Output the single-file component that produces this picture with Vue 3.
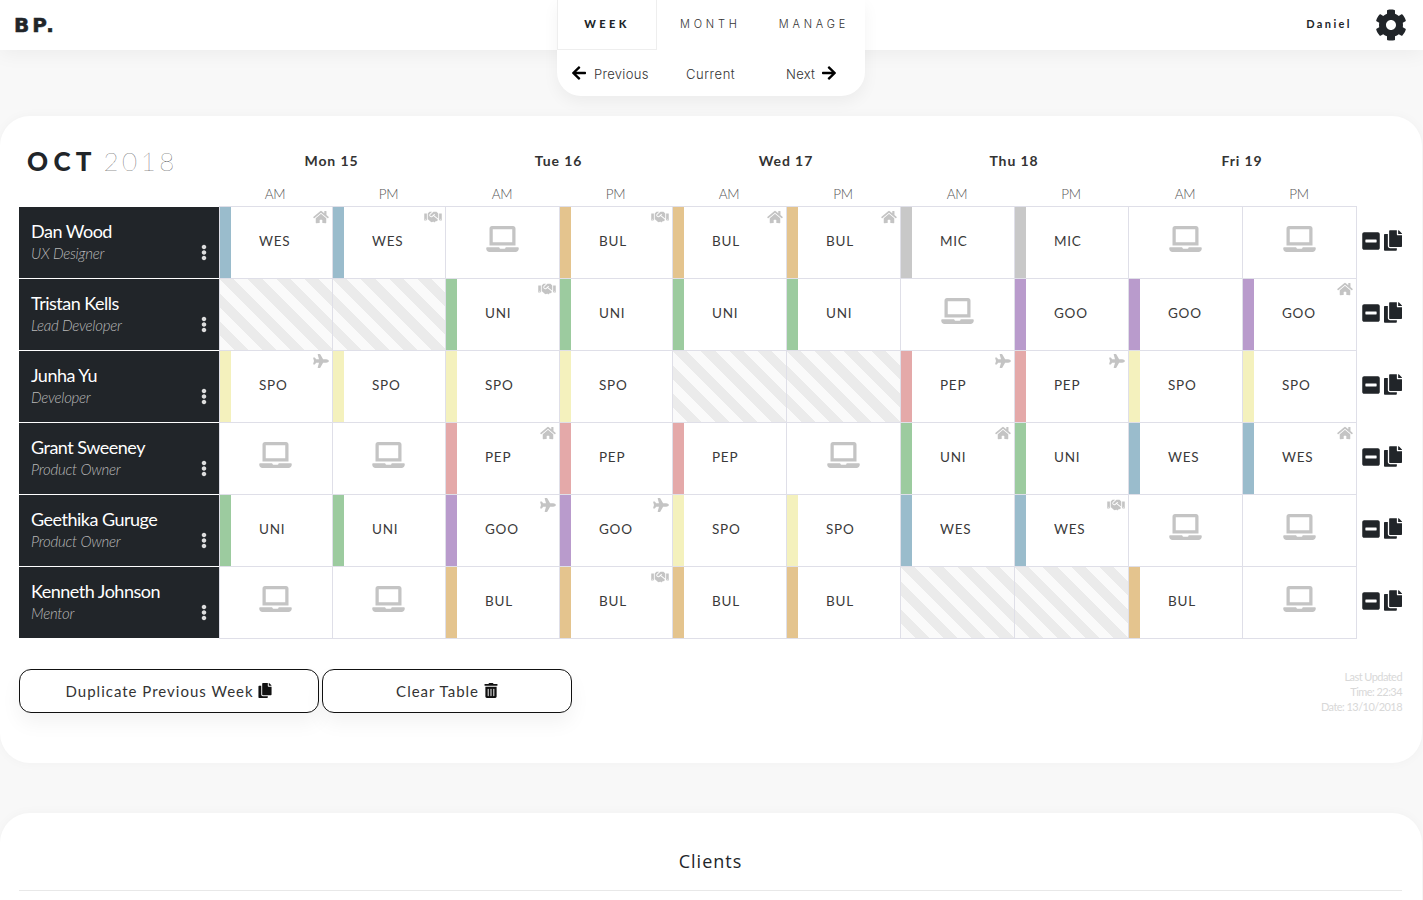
<template>
  <div class="page">
    <header class="topbar">
      <div class="logo">BP.</div>
      <nav class="nav">
        <div class="tabs">
          <a class="tab active">WEEK</a>
          <a class="tab month">MONTH</a>
          <a class="tab manage">MANAGE</a>
        </div>
        <div class="subnav">
          <a class="sub prev"><svg class="arrow" viewBox="0 0 448 512"><path :d="icons.left" /></svg>Previous</a>
          <a class="sub current">Current</a>
          <a class="sub next">Next<svg class="arrow" viewBox="0 0 448 512"><path :d="icons.right" /></svg></a>
        </div>
      </nav>
      <div class="user">
        <span class="username">Daniel</span>
        <svg class="cog" viewBox="0 0 512 512"><path :d="icons.cog" /></svg>
      </div>
    </header>

    <main class="main">
      <section class="card schedule">
        <div class="grid">
          <div class="title"><b>OCT</b> <span>2018</span></div>
          <div v-for="d in days" :key="d" class="day">{{ d }}</div>
          <div class="blank"></div>

          <div class="blank"></div>
          <template v-for="d in days" :key="d">
            <div class="half">AM</div>
            <div class="half">PM</div>
          </template>
          <div class="blank"></div>

          <template v-for="(p, r) in people" :key="p.name">
            <div class="person">
              <div class="name">{{ p.name }}</div>
              <div class="role">{{ p.role }}</div>
              <svg class="dots" viewBox="0 0 192 512"><path :d="icons.dots" /></svg>
            </div>
            <div
              v-for="(c, i) in p.cells"
              :key="i"
              class="cell"
              :class="{ first: r === 0, striped: c === 'x', monday: i < 2 }"
            >
              <template v-if="c === 'l'">
                <svg class="laptop" viewBox="0 0 640 512"><path :d="icons.laptop" /></svg>
              </template>
              <template v-else-if="c !== 'x'">
                <span class="band" :style="{ background: colors[code(c)] }"></span>
                <span class="code">{{ code(c) }}</span>
                <svg v-if="kind(c)" class="mark" :class="kind(c)" :viewBox="boxes[kind(c)]"><path :d="icons[kind(c)]" /></svg>
              </template>
            </div>
            <div class="row-actions">
              <svg class="act minus" viewBox="0 0 448 512"><path :d="icons.minus" /></svg>
              <svg class="act copy" viewBox="0 0 448 512"><path :d="icons.copy" /></svg>
            </div>
          </template>
        </div>

        <div class="footer">
          <button class="btn dup">Duplicate Previous Week <svg viewBox="0 0 448 512"><path :d="icons.copy" /></svg></button>
          <button class="btn clear">Clear Table <svg viewBox="0 0 448 512"><path :d="icons.trash" /></svg></button>
          <div class="updated">
            <div>Last Updated</div>
            <div>Time: 22:34</div>
            <div>Date: 13/10/2018</div>
          </div>
        </div>
      </section>

      <section class="card clients">
        <h2>Clients</h2>
      </section>
    </main>
  </div>
</template>

<script setup>
const days = ['Mon 15', 'Tue 16', 'Wed 17', 'Thu 18', 'Fri 19']

const colors = {
  WES: '#9abccc',
  BUL: '#e4c48e',
  MIC: '#c8c8c8',
  UNI: '#9ccb9f',
  GOO: '#b99bcc',
  SPO: '#f4f1bd',
  PEP: '#e4a9a9'
}

// l = on the laptop, x = not working, CODE:mark = client + where
const people = [
  { name: 'Dan Wood', role: 'UX Designer', cells: ['WES:home', 'WES:shake', 'l', 'BUL:shake', 'BUL:home', 'BUL:home', 'MIC', 'MIC', 'l', 'l'] },
  { name: 'Tristan Kells', role: 'Lead Developer', cells: ['x', 'x', 'UNI:shake', 'UNI', 'UNI', 'UNI', 'l', 'GOO', 'GOO', 'GOO:home'] },
  { name: 'Junha Yu', role: 'Developer', cells: ['SPO:plane', 'SPO', 'SPO', 'SPO', 'x', 'x', 'PEP:plane', 'PEP:plane', 'SPO', 'SPO'] },
  { name: 'Grant Sweeney', role: 'Product Owner', cells: ['l', 'l', 'PEP:home', 'PEP', 'PEP', 'l', 'UNI:home', 'UNI', 'WES', 'WES:home'] },
  { name: 'Geethika Guruge', role: 'Product Owner', cells: ['UNI', 'UNI', 'GOO:plane', 'GOO:plane', 'SPO', 'SPO', 'WES', 'WES:shake', 'l', 'l'] },
  { name: 'Kenneth Johnson', role: 'Mentor', cells: ['l', 'l', 'BUL', 'BUL:shake', 'BUL', 'BUL', 'x', 'x', 'BUL', 'l'] }
]

const code = (c) => c.split(':')[0]
const kind = (c) => c.split(':')[1]

const boxes = { home: '0 0 576 512', shake: '0 0 640 512', plane: '0 0 576 512' }

const icons = {
  left: 'M257.5 445.1l-22.2 22.2c-9.4 9.4-24.6 9.4-33.9 0L7 273c-9.4-9.4-9.4-24.6 0-33.9L201.4 44.7c9.4-9.4 24.6-9.4 33.9 0l22.2 22.2c9.5 9.5 9.3 25-.4 34.3L136.6 216H424c13.3 0 24 10.7 24 24v32c0 13.3-10.7 24-24 24H136.6l120.5 114.8c9.8 9.3 10 24.8.4 34.3z',
  right: 'M190.5 66.9l22.2-22.2c9.4-9.4 24.6-9.4 33.9 0L441 239c9.4 9.4 9.4 24.6 0 33.9L246.6 467.3c-9.4 9.4-24.6 9.4-33.9 0l-22.2-22.2c-9.5-9.5-9.3-25 .4-34.3L311.4 296H24c-13.3 0-24-10.7-24-24v-32c0-13.3 10.7-24 24-24h287.4L190.9 101.2c-9.8-9.3-10-24.8-.4-34.3z',
  cog: 'M487.4 315.7l-42.6-24.6c4.3-23.2 4.3-47 0-70.2l42.6-24.6c4.9-2.8 7.1-8.6 5.5-14-11.1-35.6-30-67.8-54.7-94.6-3.8-4.1-10-5.1-14.8-2.3L380.8 110c-17.9-15.4-38.5-27.3-60.8-35.1V25.8c0-5.6-3.9-10.5-9.4-11.7-36.7-8.2-74.3-7.8-109.2 0-5.5 1.2-9.4 6.1-9.4 11.7V75c-22.2 7.9-42.8 19.8-60.8 35.1L88.7 85.5c-4.9-2.8-11-1.9-14.8 2.3-24.7 26.7-43.6 58.9-54.7 94.6-1.7 5.4.6 11.2 5.5 14L67.3 221c-4.3 23.2-4.3 47 0 70.2l-42.6 24.6c-4.9 2.8-7.1 8.6-5.5 14 11.1 35.6 30 67.8 54.7 94.6 3.8 4.1 10 5.1 14.8 2.3l42.6-24.6c17.9 15.4 38.5 27.3 60.8 35.1v49.2c0 5.6 3.9 10.5 9.4 11.7 36.7 8.2 74.3 7.8 109.2 0 5.5-1.2 9.4-6.1 9.4-11.7v-49.2c22.2-7.9 42.8-19.8 60.8-35.1l42.6 24.6c4.9 2.8 11 1.9 14.8-2.3 24.7-26.7 43.6-58.9 54.7-94.6 1.5-5.5-.7-11.3-5.6-14.1zM256 336c-44.1 0-80-35.9-80-80s35.9-80 80-80 80 35.9 80 80-35.9 80-80 80z',
  home: 'M280.37 148.26L96 300.11V464a16 16 0 0 0 16 16l112.06-.29a16 16 0 0 0 15.92-16V368a16 16 0 0 1 16-16h64a16 16 0 0 1 16 16v95.64a16 16 0 0 0 16 16.05L464 480a16 16 0 0 0 16-16V300L295.67 148.26a12.19 12.19 0 0 0-15.3 0zM571.6 251.47L488 182.56V44.05a12 12 0 0 0-12-12h-56a12 12 0 0 0-12 12v72.61L318.47 43a48 48 0 0 0-61 0L4.34 251.47a12 12 0 0 0-1.6 16.9l25.5 31A12 12 0 0 0 45.15 301l235.22-193.74a12.19 12.19 0 0 1 15.3 0L530.9 301a12 12 0 0 0 16.9-1.6l25.5-31a12 12 0 0 0-1.7-16.93z',
  plane: 'M480 192H365.71L260.61 8.06A16.014 16.014 0 0 0 246.71 0h-65.5c-10.63 0-18.3 10.17-15.38 20.39L214.86 192H112l-43.2-57.6c-3.02-4.03-7.77-6.4-12.8-6.4H16.01C5.6 128-2.04 137.78.49 147.88L32 256 .49 364.12C-2.04 374.22 5.6 384 16.01 384H56c5.04 0 9.78-2.37 12.8-6.4L112 320h102.86l-49.03 171.6c-2.92 10.22 4.75 20.4 15.38 20.4h65.5c5.74 0 11.04-3.08 13.89-8.06L365.71 320H480c35.35 0 96-28.65 96-64s-60.65-64-96-64z',
  shake: 'M434.7 64h-85.9c-8 0-15.7 3-21.6 8.4l-98.3 90c-.1.1-.2.3-.3.4-16.6 15.6-16.3 40.5-2.1 56 12.7 13.9 39.4 17.6 56.1 2.7.1-.1.3-.1.4-.2l79.9-73.2c6.5-5.9 16.7-5.5 22.6 1 6 6.5 5.5 16.6-1 22.6l-26.1 23.9L504 313.8c2.9 2.4 5.5 5 7.9 7.7V128l-54.6-54.6c-5.9-6-14.1-9.4-22.6-9.4zM544 128.2v223.9c0 17.7 14.3 32 32 32h64V128.2h-96zm48 223.9c-8.8 0-16-7.2-16-16s7.2-16 16-16 16 7.2 16 16-7.2 16-16 16zM0 384h64c17.7 0 32-14.3 32-32V128.2H0V384zm48-63.9c8.8 0 16 7.2 16 16s-7.2 16-16 16-16-7.2-16-16c0-8.9 7.2-16 16-16zm435.9 18.6L334.6 217.5l-30 27.5c-29.7 27.1-75.2 24.5-101.7-4.4-26.9-29.4-24.8-74.9 4.4-101.7L289.1 64h-83.8c-8.5 0-16.6 3.4-22.6 9.4L128 128v223.9h18.3l90.5 81.9c27.4 22.3 67.7 18.1 90-9.3l.2-.2 17.9 15.5c15.9 13 39.4 10.5 52.3-5.4l31.4-38.6 5.4 4.4c13.7 11.1 33.9 9.1 45-4.7l9.5-11.7c11.2-13.8 9.1-33.9-4.6-45.1z',
  laptop: 'M624 416H381.54c-.74 19.81-14.71 32-32.74 32H288c-18.69 0-33.02-17.47-32.77-32H16c-8.8 0-16 7.2-16 16v16c0 35.2 28.8 64 64 64h512c35.2 0 64-28.8 64-64v-16c0-8.8-7.2-16-16-16zM576 48c0-26.4-21.6-48-48-48H112C85.6 0 64 21.6 64 48v336h512V48zm-64 272H128V64h384v256z',
  dots: 'M96 184c39.8 0 72 32.2 72 72s-32.2 72-72 72-72-32.2-72-72 32.2-72 72-72zM24 80c0 39.8 32.2 72 72 72s72-32.2 72-72S135.8 8 96 8 24 40.2 24 80zm0 352c0 39.8 32.2 72 72 72s72-32.2 72-72-32.2-72-72-72-72 32.2-72 72z',
  minus: 'M400 32H48C21.5 32 0 53.5 0 80v352c0 26.5 21.5 48 48 48h352c26.5 0 48-21.5 48-48V80c0-26.5-21.5-48-48-48zM92 296c-6.6 0-12-5.4-12-12v-56c0-6.6 5.4-12 12-12h264c6.6 0 12 5.4 12 12v56c0 6.6-5.4 12-12 12H92z',
  copy: 'M320 448v40c0 13.255-10.745 24-24 24H24c-13.255 0-24-10.745-24-24V120c0-13.255 10.745-24 24-24h72v296c0 30.879 25.121 56 56 56h168zm0-344V0H152c-13.255 0-24 10.745-24 24v368c0 13.255 10.745 24 24 24h272c13.255 0 24-10.745 24-24V128H344c-13.2 0-24-10.8-24-24zm120.971-31.029L375.029 7.029A24 24 0 0 0 358.059 0H352v96h96v-6.059a24 24 0 0 0-7.029-16.97z',
  trash: 'M32 464a48 48 0 0 0 48 48h288a48 48 0 0 0 48-48V128H32zm272-256a16 16 0 0 1 32 0v224a16 16 0 0 1-32 0zm-96 0a16 16 0 0 1 32 0v224a16 16 0 0 1-32 0zm-96 0a16 16 0 0 1 32 0v224a16 16 0 0 1-32 0zM432 32H312l-9.4-18.7A24 24 0 0 0 281.1 0H166.8a23.72 23.72 0 0 0-21.4 13.3L136 32H16A16 16 0 0 0 0 48v32a16 16 0 0 0 16 16h416a16 16 0 0 0 16-16V48a16 16 0 0 0-16-16z'
}
</script>

<style>
html, body {
  margin: 0;
  background: #f8f8f8;
  overflow: hidden;
}
</style>

<style scoped>
.page {
  height: 900px;
  overflow: hidden;
  background: #f8f8f8;
  font-family: Lato, "Liberation Sans", sans-serif;
  color: #212529;
}

/* Top bar */
.topbar {
  position: relative;
  z-index: 5;
  height: 50px;
  display: flex;
  align-items: center;
  justify-content: space-between;
  padding: 0 16px 0 14px;
  background: #fff;
  box-shadow: 0 4px 20px rgba(0, 0, 0, 0.05);
}

.logo {
  font-family: "DejaVu Sans", sans-serif;
  font-weight: 700;
  font-size: 20px;
  letter-spacing: 3px;
  -webkit-text-stroke: 0.5px #212529;
}

.nav {
  position: absolute;
  left: 557px;
  top: 0;
  width: 308px;
  background: #fff;
  border-radius: 0 0 24px 24px;
  box-shadow: 0 6px 16px rgba(0, 0, 0, 0.05);
  font-family: Inter, sans-serif;
}

.tabs {
  display: flex;
  height: 50px;
  align-items: center;
}

.tab {
  font-size: 11px;
  font-weight: 300;
  letter-spacing: 3.8px;
  color: #333;
  margin-top: -2px;
}

.tab.active {
  box-sizing: border-box;
  width: 100px;
  height: 50px;
  margin-top: 0;
  line-height: 48px;
  text-align: center;
  border: 1px solid #eee;
  border-top: 0;
  font-family: Lato, sans-serif;
  font-weight: 900;
  letter-spacing: 3.4px;
  color: #212529;
}

.tab.month {
  margin-left: 23px;
}

.tab.manage {
  margin-left: 38px;
}

.subnav {
  display: flex;
  height: 46px;
  align-items: center;
  font-size: 13px;
  font-weight: 300;
  letter-spacing: 0.3px;
  color: #333;
  padding: 2px 0 0 15px;
  box-sizing: border-box;
}

.sub {
  display: flex;
  align-items: center;
}

.prev {
  width: 114px;
}

.current {
  width: 100px;
  margin-top: -1px;
  letter-spacing: 0.55px;
}

.arrow {
  width: 14px;
  height: 16px;
  fill: #000;
}

.prev .arrow {
  margin-right: 8px;
  margin-top: -2px;
}

.next .arrow {
  margin-left: 7px;
  margin-top: -2px;
}

.user {
  display: flex;
  align-items: center;
  gap: 23px;
}

.username {
  margin-top: -3px;
  font-size: 11px;
  font-weight: 700;
  letter-spacing: 2.4px;
}

.cog {
  width: 32px;
  height: 32px;
  fill: #212529;
}

/* Cards */
.main {
  padding-top: 66px;
}

.card {
  box-sizing: border-box;
  margin-right: 1px;
  padding: 0 20px 0 19px;
  background: #fff;
  border-radius: 30px;
  box-shadow: 0 0 12px rgba(0, 0, 0, 0.03);
}

.schedule {
  padding-top: 30px;
  padding-bottom: 49px;
}

.grid {
  display: grid;
  grid-template-columns: 200px 114px 113px 114px 113px repeat(6, 114px) 45px;
  grid-template-rows: 30px 31px repeat(6, 72px);
}

.title {
  padding: 0 0 0 8px;
  font-size: 26px;
  line-height: 30px;
  white-space: nowrap;
}

.title b {
  font-weight: 900;
  letter-spacing: 5.3px;
}

.title span {
  font-weight: 100;
  letter-spacing: 3.5px;
  color: #111;
}

.day {
  grid-column: span 2;
  text-align: center;
  font-size: 14px;
  font-weight: 700;
  letter-spacing: 0.9px;
  line-height: 30px;
  padding-right: 2px;
  color: #333;
}

.half {
  text-align: center;
  font-size: 13.5px;
  font-weight: 300;
  letter-spacing: -0.2px;
  color: #555;
  line-height: 36px;
  padding-right: 2px;
}

.person {
  position: relative;
  background: #212529;
  margin-bottom: 1px;
  padding: 12px 0 0 12px;
  color: #fff;
}

.name {
  font-size: 18px;
  font-weight: 400;
  letter-spacing: -0.5px;
  line-height: 24px;
}

.role {
  font-size: 15px;
  font-weight: 300;
  font-style: italic;
  letter-spacing: -0.25px;
  line-height: 20px;
  color: #b8b8b8;
}

.dots {
  position: absolute;
  right: 12px;
  top: 37px;
  width: 6px;
  height: 17px;
  fill: #ddd;
}

.cell {
  position: relative;
  box-sizing: border-box;
  display: flex;
  align-items: center;
  justify-content: center;
  border-right: 1px solid #dfdfe8;
  border-bottom: 1px solid #dfdfe8;
}

.cell.first {
  border-top: 1px solid #dfdfe8;
  margin-top: -1px;
}

.person + .cell {
  border-left: 1px solid #dfdfe8;
}

.cell.striped {
  background: repeating-linear-gradient(45deg, #fafafa 0 10px, #ebebeb 10px 20px);
}

.band {
  position: absolute;
  left: 0;
  top: 0;
  bottom: 0;
  width: 11px;
}

.code {
  position: absolute;
  left: 39px;
  top: 50%;
  margin-top: -13px;
  font-size: 13.5px;
  letter-spacing: 0.75px;
  line-height: 22px;
  color: #3a3a3a;
}

.laptop {
  width: 33px;
  height: 26px;
  margin-top: -7px;
  fill: #c4c4c4;
}

.monday .laptop {
  margin-right: 2px;
}

.mark {
  position: absolute;
  top: 3px;
  right: 3px;
  height: 14px;
  fill: #c4c4c4;
}

.mark.home,
.mark.plane {
  width: 16px;
}

.mark.shake {
  width: 18px;
}

.row-actions {
  display: flex;
  align-items: center;
  justify-content: flex-end;
  gap: 4px;
  padding-bottom: 5px;
}

.act {
  fill: #212529;
}

.minus {
  width: 18px;
  height: 20px;
}

.copy {
  width: 18px;
  height: 21px;
}

/* Footer */
.footer {
  display: flex;
  align-items: flex-start;
  gap: 3px;
  margin-top: 30px;
}

.btn {
  height: 44px;
  padding: 0;
  background: #fff;
  border: 1px solid #111;
  border-radius: 12px;
  box-shadow: 0 10px 20px rgba(0, 0, 0, 0.05);
  font-family: Lato, sans-serif;
  font-size: 15px;
  letter-spacing: 1px;
  color: #333;
}

.btn svg {
  width: 14px;
  height: 15px;
  fill: #111;
  vertical-align: -1px;
}

.dup {
  width: 300px;
}

.clear {
  width: 250px;
}

.updated {
  margin-left: auto;
  text-align: right;
  font-size: 11px;
  line-height: 15px;
  letter-spacing: -0.55px;
  color: #d8d8d8;
}

/* Clients */
.clients {
  margin-top: 50px;
  height: 300px;
  padding-top: 36px;
}

.clients h2 {
  margin: 0;
  padding-bottom: 17px;
  border-bottom: 1px solid #e8e8e8;
  font-family: "Open Sans", sans-serif;
  font-size: 18px;
  font-weight: 400;
  line-height: 24px;
  letter-spacing: 1px;
  text-align: center;
  color: #212529;
}
</style>
